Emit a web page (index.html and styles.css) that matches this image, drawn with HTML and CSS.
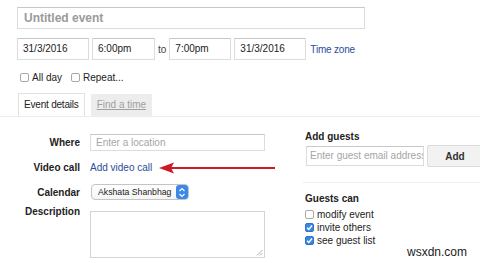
FILE: index.html
```html
<!DOCTYPE html>
<html lang="en">
<head>
  <meta charset="UTF-8" />
  <meta name="viewport" content="width=device-width, initial-scale=1.0"/>
  <title>Untitled event</title>
  <link rel="stylesheet" href="styles.css">
</head>
<body>

  <div class="page">
    <div class="title-box">Untitled event</div>

    <div class="when">
      <div class="field date">31/3/2016</div>
      <div class="field time">6:00pm</div>
      <span class="to">to</span>
      <div class="field time2">7:00pm</div>
      <div class="field date">31/3/2016</div>
      <a href="#" class="link tz">Time zone</a>
    </div>

    <div class="opts">
      <span class="cb"></span><span class="opt-label">All day</span>
      <span class="cb"></span><span class="opt-label">Repeat...</span>
    </div>

    <div class="tabs">
      <div class="tab active">Event details</div>
      <div class="tab">Find a time</div>
    </div>
  </div>

  <div class="details">
    <div class="form">
      <label class="lbl">Where</label>
      <div class="field small placeholder">Enter a location</div>

      <label class="lbl">Video call</label>
      <div class="video">
        <a href="#" class="link">Add video call</a>
        <!-- red annotation arrow -->
        <svg class="arrow" width="116" height="12" viewBox="0 0 116 12">
          <path d="M0 6 L15 0.5 L12 6 L15 11.5 Z" fill="#cc1b24"/>
          <rect x="11" y="5" width="105" height="2" fill="#cc1b24"/>
        </svg>
      </div>

      <label class="lbl">Calendar</label>
      <div class="select">
        <span>Akshata Shanbhag</span>
        <span class="stepper">
          <svg width="8" height="11" viewBox="0 0 8 11">
            <path d="M1.5 4 L4 1.5 L6.5 4 M1.5 7 L4 9.5 L6.5 7" stroke="#fff" stroke-width="1.2" fill="none"/>
          </svg>
        </span>
      </div>

      <label class="lbl top">Description</label>
      <div class="textarea">
        <svg class="grip" width="7" height="7" viewBox="0 0 7 7">
          <path d="M6.5 1 L1 6.5 M6.5 4 L4 6.5" stroke="#999" stroke-width="0.8"/>
        </svg>
      </div>
    </div>

    <div class="side">
      <h4>Add guests</h4>
      <div class="guest-row">
        <div class="field guest placeholder">Enter guest email address</div>
        <button class="add-btn">Add</button>
      </div>

      <div class="perms">
        <h4>Guests can</h4>
        <div class="perm"><span class="cb"></span>modify event</div>
        <div class="perm"><span class="cb on"><svg width="7" height="7" viewBox="0 0 7 7"><path d="M1 3.8 L2.8 5.5 L6 1.5" stroke="#fff" stroke-width="1.4" fill="none"/></svg></span>invite others</div>
        <div class="perm"><span class="cb on"><svg width="7" height="7" viewBox="0 0 7 7"><path d="M1 3.8 L2.8 5.5 L6 1.5" stroke="#fff" stroke-width="1.4" fill="none"/></svg></span>see guest list</div>
      </div>
    </div>
  </div>

  <div class="watermark">wsxdn.com</div>

</body>
</html>
```

FILE: styles.css
```css
* {
  margin: 0;
  padding: 0;
  box-sizing: border-box;
}

body {
  font-family: "Liberation Sans", Arial, sans-serif;
  font-size: 10px;
  color: #222;
  background: #fff;
  width: 480px;
  height: 263px;
  overflow: hidden;
  position: relative;
}

.page {
  padding: 7px 0 0 17px;
}

.title-box {
  width: 348px;
  height: 22px;
  border: 1px solid #dcdcdc;
  border-top-color: #c8c8c8;
  padding-left: 6px;
  font-size: 12px;
  font-weight: bold;
  line-height: 20px;
  color: #9a9a9a;
}

.field {
  height: 22px;
  border: 1px solid #dcdcdc;
  border-top-color: #c8c8c8;
  padding-left: 5px;
  line-height: 20px;
  background: #fff;
  white-space: nowrap;
  overflow: hidden;
  flex-shrink: 0;
}

.when {
  display: flex;
  align-items: center;
  gap: 3px;
  margin-top: 9px;
}

.date { width: 72px; }
.time { width: 63px; }
.time2 { width: 62px; }

.to {
  color: #444;
}

.link {
  color: #2b4c9c;
  text-decoration: none;
  white-space: nowrap;
}

.tz {
  margin-left: 1px;
  letter-spacing: -0.2px;
}

.opts {
  display: flex;
  align-items: center;
  margin: 12px 0 0 3px;
  height: 10px;
}

.cb {
  display: inline-flex;
  align-items: center;
  justify-content: center;
  width: 9px;
  height: 9px;
  border: 1px solid #a8a8a8;
  border-radius: 2px;
  background: #fff;
  flex-shrink: 0;
}

.cb.on {
  background: #3a86e3;
  border-color: #2f74cc;
}

.opt-label {
  margin: 0 9px 0 3px;
}

.tabs {
  display: flex;
  gap: 6px;
  margin-top: 11px;
  padding-left: 1px;
}

.tab {
  height: 22px;
  padding: 0 6px;
  line-height: 21px;
  background: #ededed;
  color: #a0a0a0;
  text-decoration: underline;
  margin-top: 1px;
}

.tab.active {
  background: #fff;
  color: #222;
  text-decoration: none;
  border: 1px solid #e2e2e2;
  border-bottom: none;
  margin-top: 0;
  height: 23px;
  padding: 0 5px;
  letter-spacing: -0.2px;
}

.details {
  display: flex;
  border-top: 1px solid #ececec;
  padding-top: 14px;
}

.form {
  display: grid;
  grid-template-columns: 63px 175px;
  column-gap: 10px;
  row-gap: 8px;
  align-items: center;
  margin: 3px 0 0 17px;
}

.lbl {
  font-weight: bold;
  text-align: right;
  white-space: nowrap;
}

.lbl.top {
  align-self: start;
  margin-top: -2px;
}

.field.small {
  height: 17px;
  line-height: 15px;
}

.placeholder {
  color: #a5a5a5;
}

.video {
  display: flex;
  align-items: center;
  height: 17px;
  overflow: visible;
}

.arrow {
  margin-left: 7px;
  flex-shrink: 0;
}

.select {
  display: flex;
  align-items: center;
  justify-content: space-between;
  width: 98px;
  height: 16px;
  margin-left: 1px;
  border: 1px solid #c4c4c4;
  border-radius: 4px;
  padding-left: 6px;
  font-size: 8.7px;
  background: linear-gradient(#fff, #f5f5f5);
}

.stepper {
  display: flex;
  align-items: center;
  justify-content: center;
  width: 12px;
  height: 14px;
  border-radius: 3px;
  background: #3b88ea;
}

.textarea {
  position: relative;
  height: 47px;
  margin-top: 3px;
  border: 1px solid #d4d4d4;
}

.grip {
  position: absolute;
  right: 1px;
  bottom: 1px;
}

.side {
  width: 175px;
  margin-left: 40px;
}

h4 {
  font-size: 10px;
  line-height: 12px;
}

.guest-row {
  display: flex;
  gap: 3px;
  margin-top: 3px;
  margin-left: 1px;
}

.guest {
  width: 118px;
  height: 20px;
  line-height: 18px;
  padding-left: 3px;
}

.add-btn {
  width: 56px;
  height: 22px;
  margin-top: -1px;
  border: 1px solid #dcdcdc;
  border-radius: 2px;
  background: #f2f2f2;
  font-family: inherit;
  font-size: 10px;
  font-weight: bold;
  color: #333;
  flex-shrink: 0;
}

.perms {
  margin-top: 15px;
  margin-left: -2px;
  padding: 10px 0 0 2px;
  border-top: 1px solid #eeeeee;
}

.perm {
  display: flex;
  align-items: center;
  gap: 3px;
  height: 13px;
}

.perms h4 {
  margin-bottom: 3px;
}

.watermark {
  position: absolute;
  left: 407px;
  top: 245px;
  font-size: 12px;
  color: #222;
}
```
